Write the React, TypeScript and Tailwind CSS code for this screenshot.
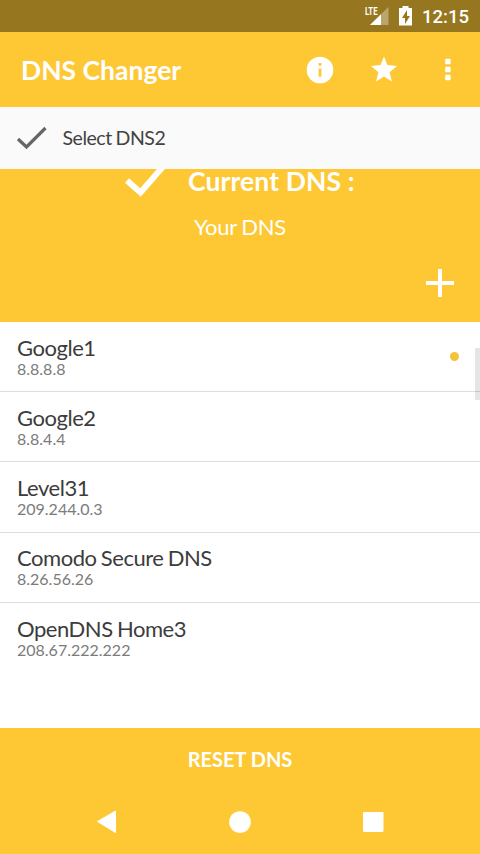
import React from "react";

const servers = [
  { name: "Google1", address: "8.8.8.8", active: true },
  { name: "Google2", address: "8.8.4.4" },
  { name: "Level31", address: "209.244.0.3" },
  { name: "Comodo Secure DNS", address: "8.26.56.26" },
  { name: "OpenDNS Home3", address: "208.67.222.222" },
];

function StatusBar() {
  return (
    <div className="flex h-8 shrink-0 items-center bg-[#967720] text-white">
      <svg className="h-8 w-[60px] ml-[360px]" viewBox="0 0 60 32" fill="#fff">
        <path d="M28.5 7V25H10Z" opacity=".35" />
        <path d="M21 14.3V25H10Z" />
        <path d="M39 8h3.5V6h6v2H52v17.5H39Z" />
        <path d="M47 10 42 18h3v6l5-8h-3Z" fill="#967720" />
        <text x="5" y="15" fontSize="11" fontWeight="700" textLength="12.5" lengthAdjust="spacingAndGlyphs" fontFamily="Roboto, sans-serif">LTE</text>
      </svg>
      <span className="ml-[2px] mt-px font-[Roboto,sans-serif] text-[18.5px] font-medium leading-8">12:15</span>
    </div>
  );
}

function AppBar() {
  return (
    <header className="flex h-[75px] shrink-0 items-center bg-[#fec834] pl-[21px] text-white">
      <h1 className="mt-0.5 w-[275px] whitespace-nowrap text-[26.5px] font-bold">DNS Changer</h1>
      <svg className="h-12 w-12" viewBox="0 0 48 48" fill="#fff">
        <circle cx="24" cy="24" r="13.3" />
        <path d="M22.6 17h2.8v2.8h-2.8zM22.6 22.5h2.8v8.2h-2.8z" fill="#fec834" />
      </svg>
      <svg className="ml-4 h-12 w-12" viewBox="0 0 48 48" fill="#fff">
        <path d="m24 10.5 3.4 8.6 9.6.8-7.4 6.3 2.3 9.3-7.9-5-7.9 5 2.3-9.3-7.4-6.3 9.6-.8Z" />
      </svg>
      <svg className="ml-4 h-12 w-12" viewBox="0 0 48 48" fill="#fff">
        <rect x="21.2" y="12.8" width="5.4" height="5.4" rx="1" />
        <rect x="21.2" y="20.8" width="5.4" height="5.4" rx="1" />
        <rect x="21.2" y="28.8" width="5.4" height="5.4" rx="1" />
      </svg>
    </header>
  );
}

export default function App() {
  return (
    <div className="flex h-[854px] w-[480px] flex-col overflow-hidden bg-white font-[Lato,sans-serif]">
      <StatusBar />
      <AppBar />
      <div className="flex h-[62px] shrink-0 items-center bg-[#fafafa] pl-4 text-[#424242]">
        <svg className="h-8 w-8" viewBox="0 0 32 32" fill="none" stroke="#666" strokeWidth="3.2">
          <path d="m2 17 8.5 8L29.5 6" />
        </svg>
        <span className="ml-[14.5px] text-[19.5px] leading-6 tracking-[-0.47px] [word-spacing:-0.7px]">Select DNS2</span>
      </div>
      <section className="flex h-[153px] shrink-0 flex-col bg-[#fec834] text-white">
        <div className="flex h-[30px] pl-[124px]">
          <svg className="h-[30px] w-12" viewBox="0 0 48 30" fill="none" stroke="#fff" strokeWidth="6">
            <path d="m3 11.5 13.5 12L43-7" />
          </svg>
          <h2 className="ml-4 -mt-[3px] whitespace-nowrap text-[26.5px] font-bold leading-[30px] tracking-[0.1px]">Current DNS :</h2>
        </div>
        <p className="mt-[13px] text-center text-[22px] leading-[30px] tracking-[-0.3px] [word-spacing:-0.5px]">Your DNS</p>
        <button className="mt-[15px] ml-[415px] h-[50px] w-[50px]" aria-label="Add DNS">
          <svg viewBox="0 0 50 50" fill="none" stroke="#fff" strokeWidth="4">
            <path d="M25 12v28M11 26h28" />
          </svg>
        </button>
      </section>
      <main className="relative h-[406px] shrink-0">
        {servers.map((server, index) => (
          <div
            key={server.name}
            className={`flex h-[70.2px] items-center pl-[17px] pr-[21px] ${index < 4 ? "border-b-[1.5px] border-[#dedede]" : ""}`}
          >
            <div className="flex-1">
              <div className="text-[22px] leading-[23px] tracking-[-0.46px] text-[#3c3c3c] [word-spacing:-0.9px]">{server.name}</div>
              <div className="text-[16px] leading-[19px] text-[#7b7b7b]">{server.address}</div>
            </div>
            {server.active && <span className="size-[9px] rounded-full bg-[#f3c439]" />}
          </div>
        ))}
        <div className="absolute right-0 top-[26px] h-[52px] w-[5px] bg-black/10" />
      </main>
      <footer className="h-[126px] shrink-0 bg-[#fec834] text-white">
        <button className="block h-[61px] w-full text-[20px] font-bold">RESET DNS</button>
        <nav className="mt-0.5 flex h-[63px] items-center justify-center">
          <svg className="h-[63px] w-[300px]" viewBox="0 0 300 63" fill="#fff">
            <path d="M7.5 30.5 25.5 20v21.5Z" stroke="#fff" strokeWidth="1" strokeLinejoin="round" />
            <circle cx="150" cy="31" r="10.8" />
            <rect x="273" y="21" width="20.5" height="20" rx="1.3" />
          </svg>
        </nav>
      </footer>
    </div>
  );
}
